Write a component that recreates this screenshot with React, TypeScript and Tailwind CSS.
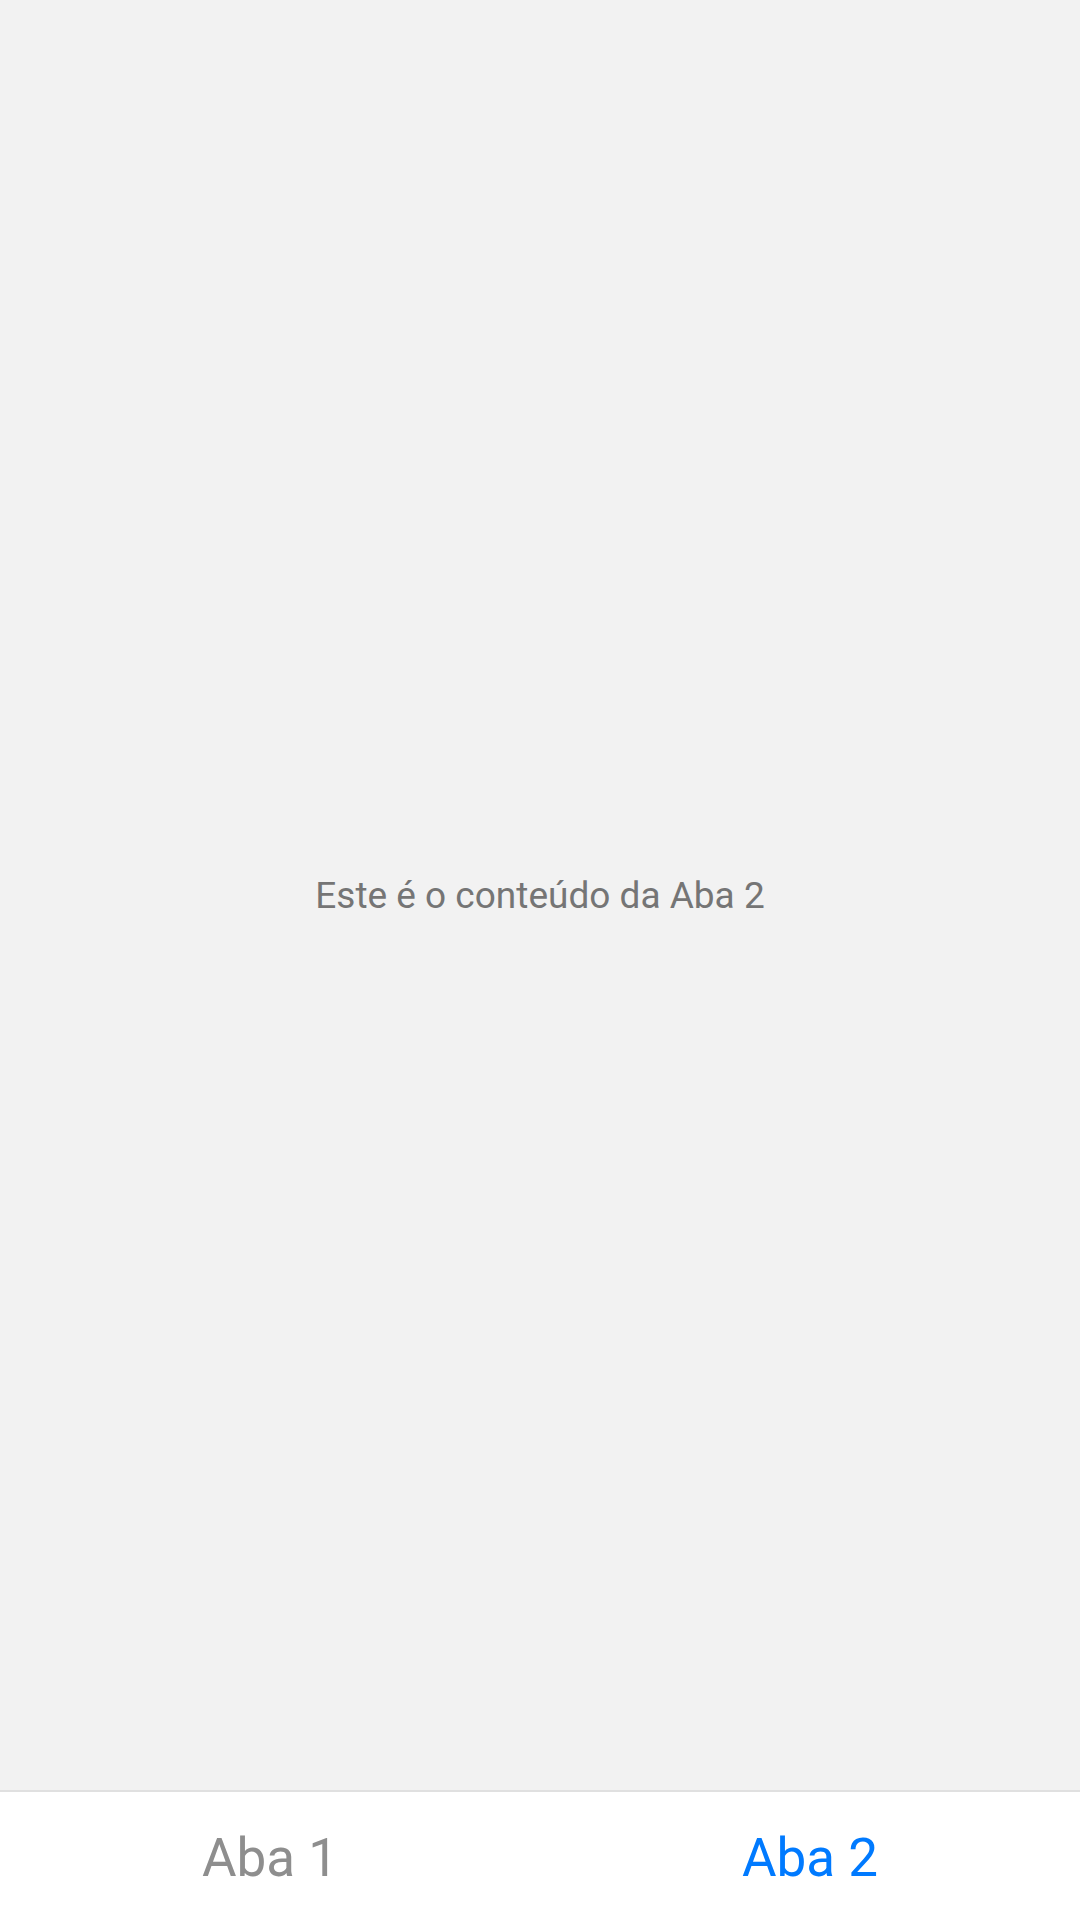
export default function App() {
  return (
    <div className="flex h-[1920px] w-[1080px] flex-col bg-[#f2f2f2]" style={{ fontFamily: 'Roboto, "Noto Sans", sans-serif' }}>
      <div className="flex flex-1 items-center justify-center pt-[2px]">
        <span className="text-[37px] text-[#757575]">Este é o conteúdo da Aba 2</span>
      </div>
      <div className="flex h-[130px] border-t-2 border-[#e0e0e0] bg-white pt-[5px]">
        <div className="flex flex-1 items-center justify-center">
          <span className="text-[53px] text-[#8e8e8e]">Aba 1</span>
        </div>
        <div className="flex flex-1 items-center justify-center">
          <span className="text-[53px] text-[#007aff]">Aba 2</span>
        </div>
      </div>
    </div>
  );
}
